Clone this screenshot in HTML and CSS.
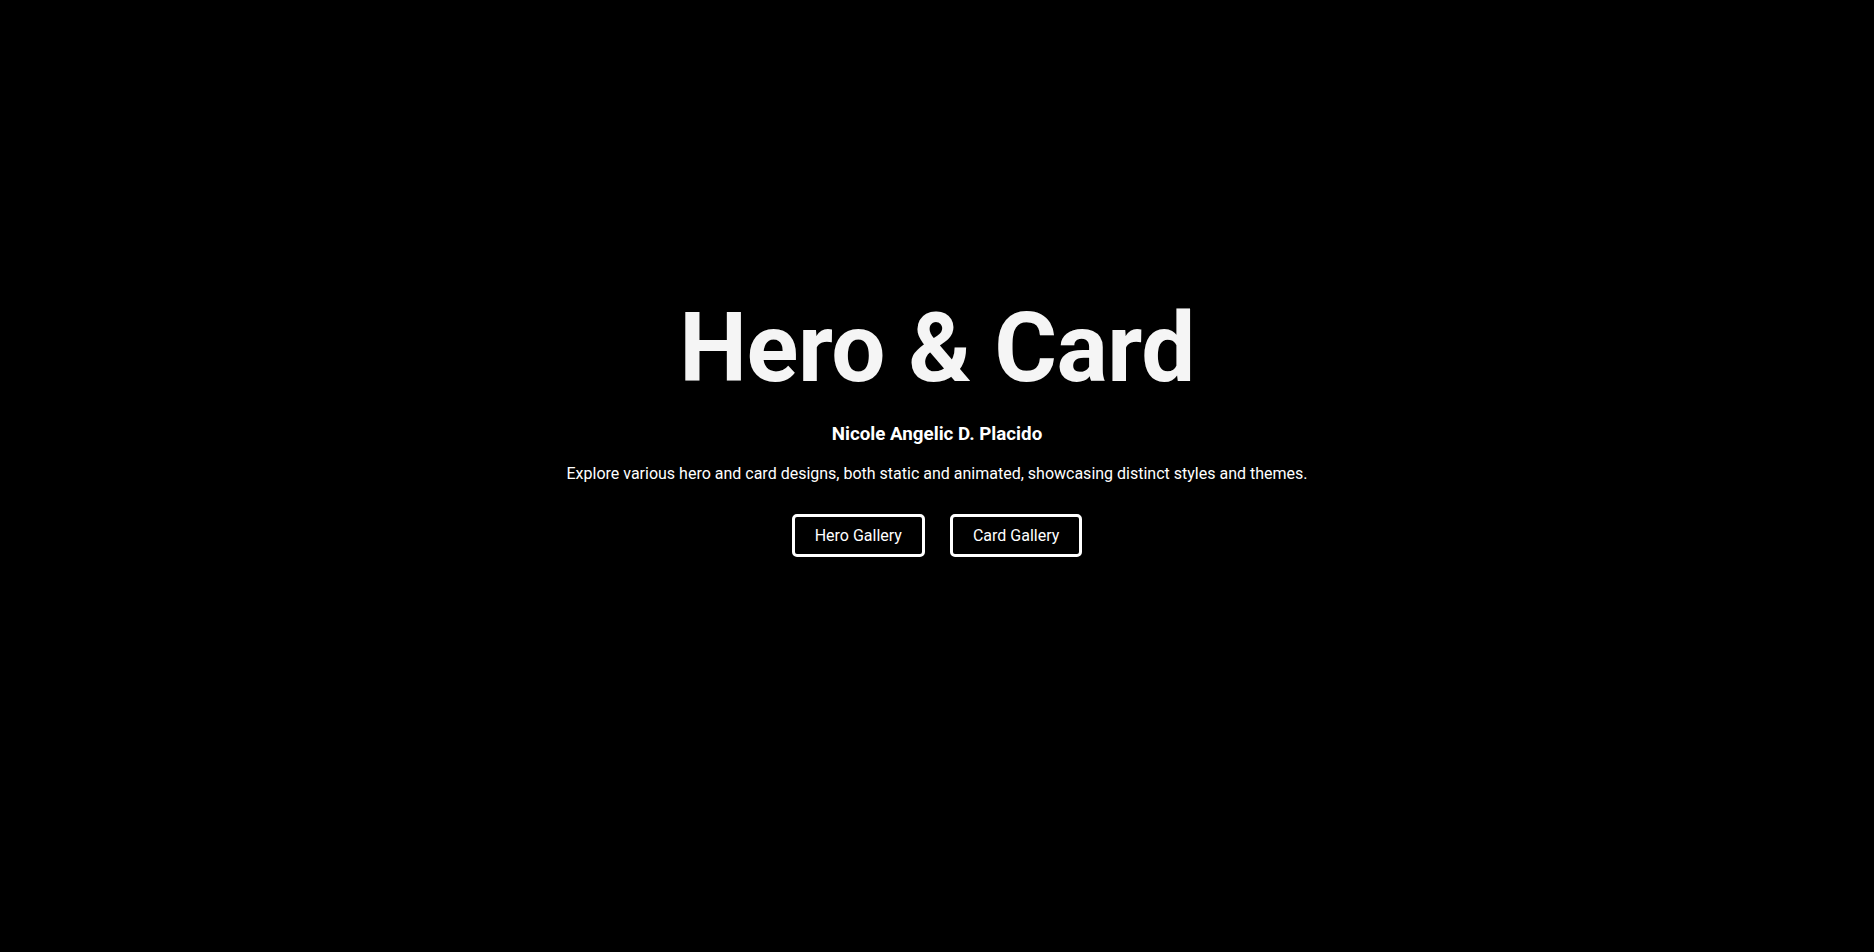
FILE: index.html
```html
<!DOCTYPE html>
<html lang="en">
<head>
<meta charset="utf-8">
<title>Hero &amp; Card</title>
<link rel="stylesheet" href="styles.css">
</head>
<body>
<main class="hero">
  <h1 class="hero-title">Hero &amp; Card</h1>
  <h2 class="hero-author">Nicole Angelic D. Placido</h2>
  <p class="hero-text">Explore various hero and card designs, both static and animated, showcasing distinct styles and themes.</p>
  <div class="hero-actions">
    <a class="btn" href="#">Hero Gallery</a>
    <a class="btn" href="#">Card Gallery</a>
  </div>
</main>
</body>
</html>
```
FILE: styles.css
```css
* { box-sizing: border-box; }
html, body {
  margin: 0;
  padding: 0;
  background: #000;
  color: #fff;
  font-family: Roboto, "Liberation Sans", sans-serif;
}
.hero {
  height: 100vh;
  display: flex;
  flex-direction: column;
  align-items: center;
  justify-content: center;
  padding-bottom: 103px;
  text-align: center;
}
.hero-title {
  margin: 0;
  font-size: 96px;
  font-weight: 700;
  line-height: normal;
  letter-spacing: -0.5px;
  color: #f5f5f5;
}
.hero-author {
  margin: 19px 0 0;
  font-size: 18.75px;
  font-weight: 700;
  line-height: normal;
}
.hero-text {
  margin: 19px 0 0;
  font-size: 16px;
  line-height: normal;
}
.hero-actions {
  margin-top: 31px;
  display: flex;
  gap: 25px;
}
.btn {
  display: block;
  padding: 9px 20px;
  border: 3px solid #fff;
  border-radius: 5px;
  color: #fff;
  text-decoration: none;
  font-size: 16px;
  line-height: normal;
}
```
